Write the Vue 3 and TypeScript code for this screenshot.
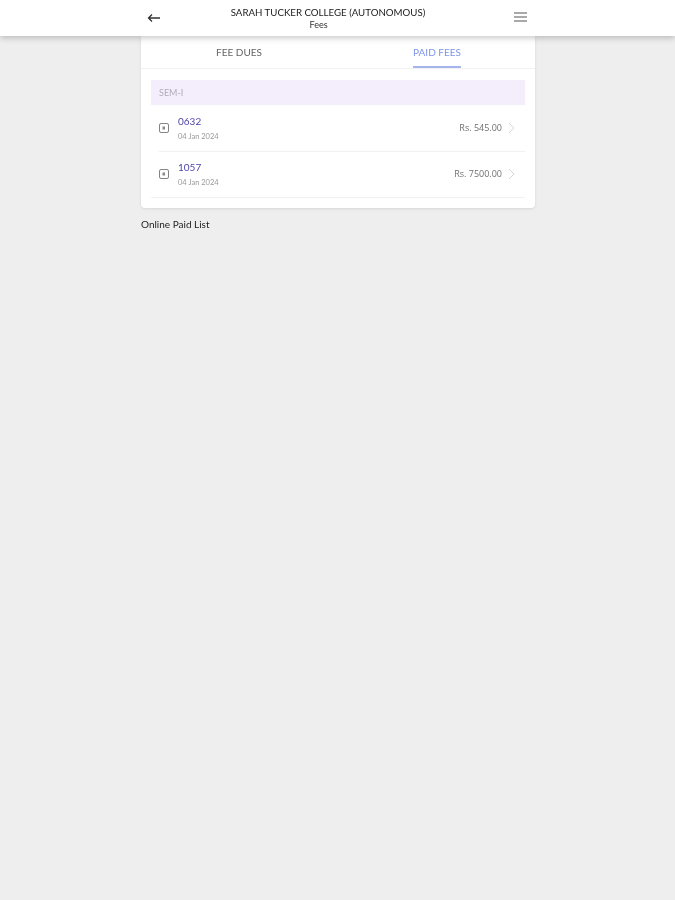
<script setup lang="ts">
interface Receipt { no: string; date: string; amount: string }
const receipts: Receipt[] = [
  { no: '0632', date: '04 Jan 2024', amount: 'Rs. 545.00' },
  { no: '1057', date: '04 Jan 2024', amount: 'Rs. 7500.00' },
]
</script>

<template>
  <div class="page">
    <header class="topbar">
      <div class="topbar-inner">
        <svg class="back" width="14" height="10" viewBox="0 0 14 10" fill="none" stroke="#333" stroke-width="1.3">
          <path d="M13 5H1.5M5 1.5 1.5 5 5 8.5" />
        </svg>
        <div class="titles">
          <div class="college">SARAH TUCKER COLLEGE (AUTONOMOUS)</div>
          <div class="sub">Fees</div>
        </div>
        <svg class="menu" width="13" height="10" viewBox="0 0 13 10" fill="none" stroke="#555" stroke-width="1.2">
          <path d="M0 1h13M0 5h13M0 9h13" />
        </svg>
      </div>
    </header>

    <main class="content">
      <section class="card">
        <nav class="tabs">
          <div class="tab"><span class="tab-label">FEE DUES</span></div>
          <div class="tab active"><span class="tab-label">PAID FEES</span></div>
        </nav>
        <div class="body">
          <div class="sem">SEM-I</div>
          <div class="rows">
            <div v-for="r in receipts" :key="r.no" class="row">
              <svg class="doc" width="10" height="10" viewBox="0 0 10 10" fill="none">
                <rect x="0.5" y="0.5" width="9" height="9" rx="1.5" stroke="#777" stroke-width="0.9" />
                <path d="M3.5 3.5h2.5v3h-2.5z" fill="#888" />
              </svg>
              <div class="info">
                <div class="no">{{ r.no }}</div>
                <div class="date">{{ r.date }}</div>
              </div>
              <div class="amount">{{ r.amount }}</div>
              <svg class="chev" width="7" height="12" viewBox="0 0 7 12" fill="none" stroke="#d0d0d0" stroke-width="0.9">
                <path d="M1 1l5 5-5 5" />
              </svg>
            </div>
          </div>
        </div>
      </section>
      <div class="online">Online Paid List</div>
    </main>
  </div>
</template>

<style>
html, body { margin: 0; background: #eeeeee; }
</style>

<style scoped>
.page {
  min-height: 900px;
  background: #eeeeee;
  font-family: Lato, "Open Sans", sans-serif;
  color: #333;
  filter: blur(0.4px);
}
.topbar {
  height: 36px;
  background: #fff;
  box-shadow: 0 2px 6px rgba(0, 0, 0, 0.22);
  position: relative;
  z-index: 2;
}
.topbar-inner {
  width: 394px;
  margin-left: 141px;
  height: 100%;
  display: flex;
  align-items: center;
  box-sizing: border-box;
  padding: 0 8px 0 6px;
}
.back { flex: none; }
.titles { flex: 1; text-align: center; margin-left: -19px; }
.college { font-size: 9.7px; line-height: 12px; color: #222; }
.sub { font-size: 9px; line-height: 12px; margin-top: 1px; color: #333; margin-right: 19px; }
.menu { flex: none; margin-bottom: 2px; }
.content { width: 394px; margin-left: 141px; }
.card {
  background: #fff;
  border-radius: 0 0 4px 4px;
  box-shadow: 0 1px 3px rgba(0, 0, 0, 0.1);
  padding-bottom: 10px;
}
.tabs {
  display: flex;
  height: 32px;
  border-bottom: 1px solid #f2f2f2;
}
.tab {
  flex: 1;
  display: flex;
  justify-content: center;
}
.tab:first-child { padding-right: 2px; }
.tab-label {
  font-size: 10px;
  line-height: 32px;
  height: 30px;
  color: #666;
}
.tab.active .tab-label {
  color: #7f95ea;
  border-bottom: 2px solid #a6b4ee;
}
.body { padding: 11px 10px 0; }
.sem {
  height: 25px;
  line-height: 25px;
  background: #f4eefc;
  padding-left: 8px;
  font-size: 9px;
  color: #b0acbb;
}
.rows { padding-top: 1px; }
.row {
  height: 46px;
  margin-left: 8px;
  box-sizing: border-box;
  display: flex;
  align-items: center;
  border-bottom: 1px solid #f1f1f1;
}
.row:last-child { margin-left: 0; padding-left: 8px; }
.doc { flex: none; margin-bottom: 2px; }
.info { flex: 1; margin-left: 9px; }
.no { font-size: 10px; line-height: 14px; color: #4f47ab; }
.date { font-size: 7.5px; line-height: 13px; margin-top: 2px; color: #999; }
.amount { font-size: 9px; color: #707070; font-family: "Open Sans", Lato, sans-serif; margin-bottom: 2px; }
.chev { flex: none; margin: 0 10px 2px 6px; }
.online { margin-top: 9px; font-size: 10px; line-height: 14px; color: #222; }
</style>
